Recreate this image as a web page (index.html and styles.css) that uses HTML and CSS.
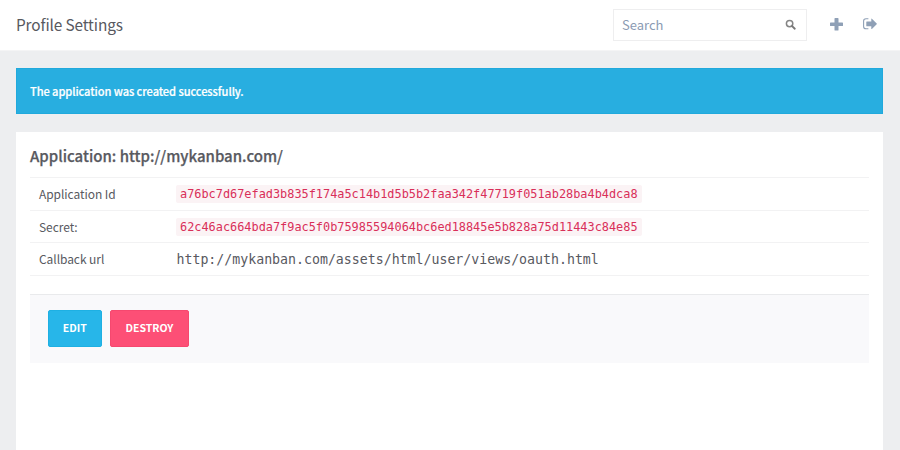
FILE: index.html
```html
<!DOCTYPE html>
<html lang="en">
<head>
<meta charset="utf-8">
<title>Profile Settings</title>
<link rel="stylesheet" href="styles.css">
</head>
<body>
<header class="topbar">
  <h1 class="title"><span>Profile Settings</span></h1>
  <div class="search">
    <span class="search-label">Search</span>
    <svg class="search-icon" width="12" height="12" viewBox="0 0 12 12"><circle cx="4.6" cy="4.6" r="3.2" fill="none" stroke="#858585" stroke-width="1.5"/><path d="M7.100 7.100 9.800 9.700" stroke="#777" stroke-width="1.900" stroke-linecap="round"/></svg>
  </div>
  <svg class="plus" width="13" height="13" viewBox="0 0 13 13"><path d="M5.1 0h2.8q.6 0 .6.6v3.9h3.9q.6 0 .6.6v2.4q0 .6-.6.6H8.5v3.9q0 .6-.6.6H5.1q-.6 0-.6-.6V8.100H.6Q0 8.100 0 7.500V5.100q0-.6.6-.6h3.900V.6q0-.6.6-.6z" fill="#8fa0b6"/></svg>
  <svg class="exit" width="14" height="12" viewBox="0 0 14 12"><path d="M5.400.7H3Q.6.7.6 3v5.500q0 2.300 2.400 2.300h2.400" fill="none" stroke="#8fa0b6" stroke-width="1.100"/><path d="M3.800 3.400h4.500V.9q0-.7.6-.2l4.800 4.700q.4.400 0 .8L8.900 10.900q-.6.500-.6-.2V8.200H3.800q-.5 0-.5-.5V3.900q0-.5.5-.5z" fill="#8fa0b6"/></svg>
</header>
<main class="content">
  <div class="notice"><span>The application was created successfully.</span></div>
  <section class="panel">
    <h2 class="heading"><span>Application: http://mykanban.com/</span></h2>
    <dl class="details">
      <div class="row"><dt>Application Id</dt><dd><code>a76bc7d67efad3b835f174a5c14b1d5b5b2faa342f47719f051ab28ba4b4dca8</code></dd></div>
      <div class="row"><dt>Secret:</dt><dd><code>62c46ac664bda7f9ac5f0b75985594064bc6ed18845e5b828a75d11443c84e85</code></dd></div>
      <div class="row"><dt>Callback url</dt><dd class="url">http://mykanban.com/assets/html/user/views/oauth.html</dd></div>
    </dl>
    <div class="actions">
      <a class="btn edit">EDIT</a>
      <a class="btn destroy">DESTROY</a>
    </div>
  </section>
</main>
</body>
</html>
```
FILE: styles.css
```css
* { box-sizing: border-box; margin: 0; padding: 0; }
html, body { height: 450px; overflow: hidden; }
body {
  display: flex;
  flex-direction: column;
  background: #edeef0;
  color: #58595f;
  font-family: "Noto Sans CJK SC", "Open Sans", sans-serif;
}
.topbar {
  flex: none;
  display: flex;
  height: 51px;
  padding: 0 23px 0 16px;
  background: #fff;
  border-bottom: 1px solid #f4f4f5;
}
.title {
  flex: 1;
  font-size: 15.4px;
  line-height: 48px;
  font-weight: 400;
  letter-spacing: -0.12px;
}
.search {
  display: flex;
  justify-content: space-between;
  width: 194px;
  height: 32px;
  margin-top: 9px;
  padding: 0 9px 0 8px;
  border: 1px solid #eeeeef;
}
.search-label { font-size: 13px; line-height: 29px; color: #8b9bb3; }
.search-icon { margin-top: 9px; }
.plus { margin: 18px 0 0 23px; }
.exit { margin: 18px 0 0 20px; }
.content { flex: 1; display: flex; flex-direction: column; padding: 17px 17px 0 16px; }
.notice {
  flex: none;
  height: 46px;
  padding: 0 13px;
  border: 1px solid #20a9dc;
  background: #28aee0;
  color: #fff;
  font-size: 11.1px;
  font-weight: 500;
  line-height: 44px;
  letter-spacing: -0.08px;
  -webkit-text-stroke: 0.2px #fff;
}
.panel { flex: 1; margin-top: 18px; padding: 0 14px; background: #fff; }
.heading { height: 45px; font-size: 15px; line-height: 48px; font-weight: 500; -webkit-text-stroke: 0.25px #58595f; }
.row { display: flex; border-top: 1px solid #f2f2f3; height: 33px; line-height: 32px; padding-left: 9px; }
.row:nth-child(2) { height: 32px; }
.details { border-bottom: 1px solid #f2f2f3; }
.details dt { width: 137px; font-size: 12px; letter-spacing: -0.06px; }
.details code {
  display: block;
  height: 18px;
  margin-top: 7px;
  padding: 0 4px;
  border-radius: 2px;
  background: #fbf3f5;
  color: #d92f59;
  font: 11.88px/18px "DejaVu Sans Mono", monospace;
}
.url { font: 13.24px/33px "DejaVu Sans Mono", monospace; padding-left: 0.5px; }
.actions {
  display: flex;
  gap: 8.500px;
  height: 69px;
  margin-top: 18px;
  padding: 15px 18px;
  border-top: 1px solid #e9eaec;
  background: #f9f9fb;
}
.btn {
  height: 37px;
  border: 1px solid;
  border-radius: 2px;
  color: #fff;
  font-size: 10.5px;
  line-height: 34px;
  font-weight: 700;
  text-align: center;
}
.edit { width: 53.500px; background: #27b6e9; border-color: #1eb0e3; }
.destroy { width: 79px; background: #fd4f76; border-color: #f6486f; }
```
